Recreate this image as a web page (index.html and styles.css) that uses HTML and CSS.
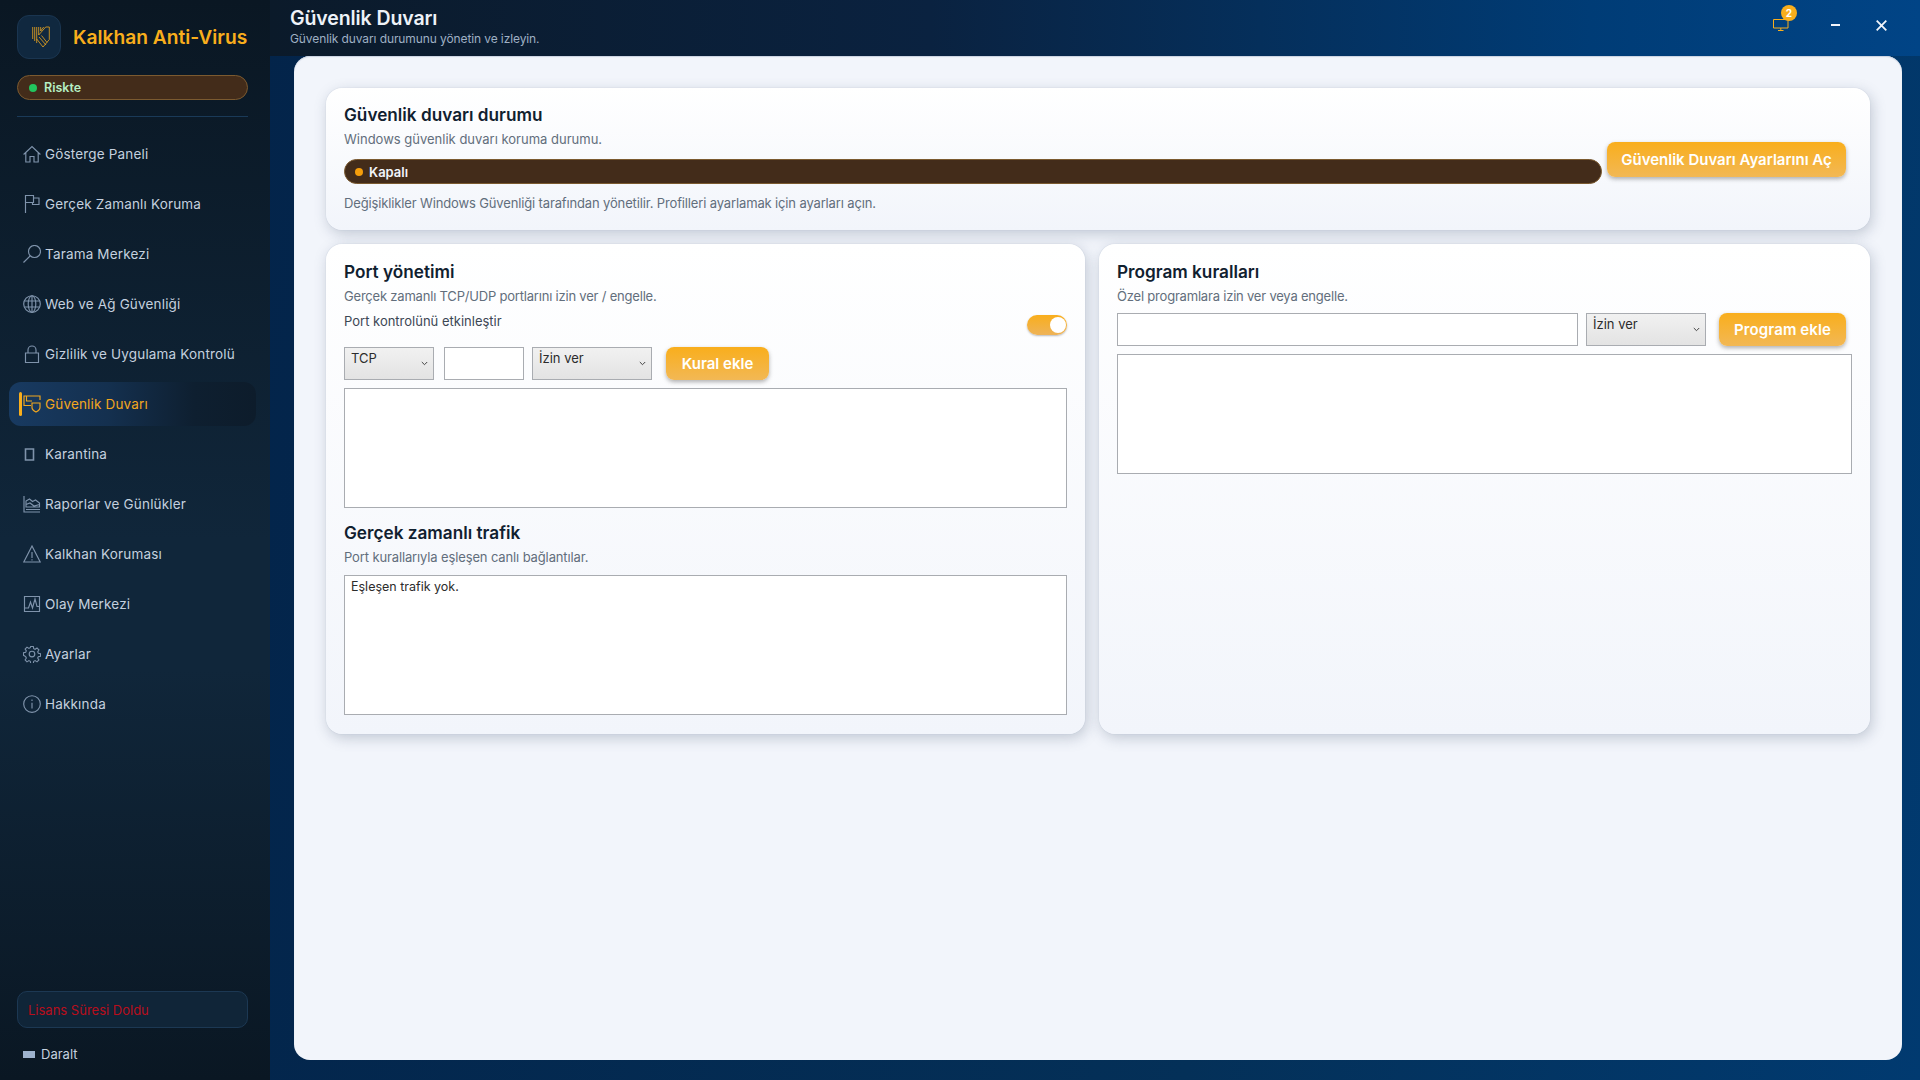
FILE: index.html
```html
<!DOCTYPE html>
<html lang="tr">
<head>
<meta charset="utf-8">
<title>Kalkhan Anti-Virus</title>
<link rel="stylesheet" href="styles.css">
</head>
<body>
<div class="app">
  <aside class="sidebar">
    <div class="brand">
      <div class="logo">
        <svg width="18" height="22" viewBox="0 0 18 22" fill="none" stroke="#f9ae1c" stroke-width=".75"><path d="M.7 1v12M2.700 1v14M4.700 1v16M6.700 1v8l7-8h3.600v12.500L11 21 4.700 13M7 11l7 8M9.500 9.500l5.500 7M8.700 1v4l3-4"/></svg>
      </div>
      <div class="brand-name">Kalkhan Anti-Virus</div>
    </div>
    <div class="risk"><span class="risk-dot"></span>Riskte</div>
    <div class="divider"></div>
    <nav class="nav">
      <a class="nav-item"><svg class="ico" viewBox="0 0 18 18"><path d="M.6 9.500 9 1.500 17.400 9.500M2.800 7.500v9.500h4.200v-5.500h4v5.500h4.200V7.500"/></svg>Gösterge Paneli</a>
      <a class="nav-item"><svg class="ico" viewBox="0 0 18 18"><path d="M2.500 18V.5h8v2.500h5.500v6.500H9.500V7.500H2.500M10.500 3v4.500h-1"/></svg>Gerçek Zamanlı Koruma</a>
      <a class="nav-item"><svg class="ico" viewBox="0 0 18 18"><circle cx="11.500" cy="6.500" r="6"/><path d="M7.200 10.800.5 17.500"/></svg>Tarama Merkezi</a>
      <a class="nav-item"><svg class="ico" viewBox="0 0 18 18"><circle cx="9" cy="9" r="8.300"/><ellipse cx="9" cy="9" rx="3.800" ry="8.300"/><path d="M9 .7v16.600M1.500 6h15M1.500 12h15"/></svg>Web ve Ağ Güvenliği</a>
      <a class="nav-item"><svg class="ico" viewBox="0 0 18 18"><path d="M2.500 8h13v9.500h-13zM5 8V5a4 4 0 0 1 8 0v3"/></svg>Gizlilik ve Uygulama Kontrolü</a>
      <a class="nav-item active"><span class="active-bar"></span><svg class="ico" viewBox="0 0 18 18"><path d="M8 10.500H1V1h16v4M3.500 1v5H9"/><path d="M9 8h8v4.500c0 2-2 3.500-4 4.500-2-1-4-2.500-4-4.500z"/></svg>Güvenlik Duvarı</a>
      <a class="nav-item"><svg class="ico ico-box" viewBox="0 0 18 18"><path d="M2.500 4h8v11h-8z"/></svg>Karantina</a>
      <a class="nav-item"><svg class="ico" viewBox="0 0 18 18"><path d="M1 1v16h16M3 14.500h14M3 12V6l3.500-2 3 2.500 3-1.500L16.500 8v4zM3 9.500 7 8l4 3 5.500-1.500"/></svg>Raporlar ve Günlükler</a>
      <a class="nav-item"><svg class="ico" viewBox="0 0 18 18"><path d="M9 1 .8 17h16.400zM9 7v6M9 14.200v1.300"/></svg>Kalkhan Koruması</a>
      <a class="nav-item"><svg class="ico" viewBox="0 0 18 18"><path d="M1.500 1.500h15v15h-15zM2 13h3.500L7.500 7l2 6 2.500-9 2 7.500h2.500"/></svg>Olay Merkezi</a>
      <a class="nav-item"><svg class="ico" viewBox="0 0 18 18"><circle cx="9" cy="9" r="2.800"/><path d="M7.600 1h2.800l.4 2.300 1.500.7 2-1.300 2 2-1.300 2 .7 1.500 2.300.4v2.800l-2.300.4-.7 1.500 1.300 2-2 2-2-1.300-1.500.7-.4 2.300H7.600l-.4-2.300-1.500-.7-2 1.300-2-2 1.300-2-.7-1.500L0 10.400V7.600l2.300-.4.700-1.500-1.300-2 2-2 2 1.300 1.500-.7z" transform="translate(.5 .5) scale(.945)"/></svg>Ayarlar</a>
      <a class="nav-item"><svg class="ico" viewBox="0 0 18 18"><circle cx="9" cy="9" r="8.300"/><path d="M9 7.800v5.700M9 4.500v1.400"/></svg>Hakkında</a>
    </nav>
    <div class="license">Lisans Süresi Doldu</div>
    <div class="collapse"><span class="collapse-icon"></span>Daralt</div>
  </aside>

  <div class="content">
    <header class="topbar">
      <div class="page-title">
        <h1>Güvenlik Duvarı</h1>
        <p>Güvenlik duvarı durumunu yönetin ve izleyin.</p>
      </div>
      <div class="top-actions">
        <div class="notify">
          <svg width="16" height="13" viewBox="0 0 16 13" fill="none" stroke="#f9ae1c" stroke-width="1"><path d="M.5.500h14.500v8.500H.5zM7.800 9v2.500M5 11.500h5.500"/></svg>
          <span class="badge">2</span>
        </div>
        <span class="win-min"></span>
        <svg class="win-close" width="11" height="11" viewBox="0 0 11 11" stroke="#f2f5fb" stroke-width="1.800"><path d="M.7.700l9.600 9.600M10.300.7.700 10.300"/></svg>
      </div>
    </header>

    <main class="panel">
      <section class="card status-card">
        <div class="status-main">
          <h2>Güvenlik duvarı durumu</h2>
          <p class="sub sub-wide">Windows güvenlik duvarı koruma durumu.</p>
          <div class="state-pill"><span class="state-dot"></span>Kapalı</div>
          <p class="note">Değişiklikler Windows Güvenliği tarafından yönetilir. Profilleri ayarlamak için ayarları açın.</p>
        </div>
        <button class="btn btn-open">Güvenlik Duvarı Ayarlarını Aç</button>
      </section>

      <div class="columns">
        <section class="card col-card">
          <h2>Port yönetimi</h2>
          <p class="sub sub-tight">Gerçek zamanlı TCP/UDP portlarını izin ver / engelle.</p>
          <div class="toggle-row">
            <span class="toggle-label">Port kontrolünü etkinleştir</span>
            <span class="toggle"><span class="knob"></span></span>
          </div>
          <div class="controls">
            <div class="select-wrap w-tcp"><select><option>TCP</option></select><svg class="chev" width="7" height="5" viewBox="0 0 7 5"><path d="M.8 1l2.700 2.700L6.200 1"/></svg></div>
            <input class="field w-port" type="text">
            <div class="select-wrap w-allow"><select><option>İzin ver</option></select><svg class="chev" width="7" height="5" viewBox="0 0 7 5"><path d="M.8 1l2.700 2.700L6.200 1"/></svg></div>
            <button class="btn btn-rule">Kural ekle</button>
          </div>
          <div class="list list-rules"></div>
          <h2 class="traffic-title">Gerçek zamanlı trafik</h2>
          <p class="sub">Port kurallarıyla eşleşen canlı bağlantılar.</p>
          <div class="list list-traffic">Eşleşen trafik yok.</div>
        </section>

        <section class="card col-card">
          <h2>Program kuralları</h2>
          <p class="sub sub-tight">Özel programlara izin ver veya engelle.</p>
          <div class="controls program-controls">
            <input class="field w-program" type="text">
            <div class="select-wrap w-allow"><select><option>İzin ver</option></select><svg class="chev" width="7" height="5" viewBox="0 0 7 5"><path d="M.8 1l2.700 2.700L6.200 1"/></svg></div>
            <button class="btn btn-program">Program ekle</button>
          </div>
          <div class="list list-rules"></div>
        </section>
      </div>
    </main>
  </div>
</div>
</body>
</html>
```
FILE: styles.css
```css
* { box-sizing: border-box; }
html, body { margin: 0; height: 100%; }
body {
  font-family: Inter, "Noto Sans", "Liberation Sans", sans-serif;
  overflow: hidden;
  background: #04264a;
}
h1, h2, p { margin: 0; }

.app { display: flex; width: 1920px; height: 1080px; }

/* Sidebar */
.sidebar {
  width: 270px;
  flex: none;
  display: flex;
  flex-direction: column;
  padding: 15px 22px 0 17px;
  background: linear-gradient(180deg, #0a1723 0%, #10263a 50%, #10263a 62%, #0a1723 100%);
}
.brand { display: flex; align-items: center; gap: 12px; height: 44px; }
.logo {
  width: 44px; height: 44px;
  border-radius: 12px;
  background: #10283f;
  border: 1px solid #1a3550;
  display: flex; align-items: center; justify-content: center;
  padding-left: 3px;
}
.brand-name { color: #f9ae1c; font-size: 19.2px; font-weight: 600; white-space: nowrap; }
.risk {
  margin-top: 16px;
  height: 25px;
  border-radius: 13px;
  background: #432c1a;
  border: 1px solid #7b5a30;
  display: flex; align-items: center;
  padding-left: 11px;
  color: #b5efc4;
  font-size: 12.500px;
  font-weight: 600;
}
.risk-dot { width: 8px; height: 8px; border-radius: 50%; background: #22c55e; margin-right: 7px; }
.divider { height: 1px; background: #1a3a58; margin-top: 16px; }
.nav { display: flex; flex-direction: column; gap: 6px; margin: 15px -8px 0; }
.nav-item {
  position: relative;
  height: 44px;
  padding-left: 36px;
  display: flex; align-items: center;
  color: #c4d0df;
  font-size: 13.500px;
  letter-spacing: .17px;
  border-radius: 12px;
  white-space: nowrap;
}
.ico {
  position: absolute;
  left: 14px; top: 13px;
  width: 18px; height: 18px;
  fill: none;
  stroke: #7f93ab;
  stroke-width: 1.15;
}
.ico-box { stroke-width: 1.6; }
.nav-item.active {
  color: #f2a71f;
  background: linear-gradient(90deg, #183a61 0%, #14304f 40%, #0e1f30 75%, #0d1c2b 100%);
}
.nav-item.active .ico { stroke: #f2a71f; }
.active-bar {
  position: absolute;
  left: 10px; top: 10px;
  width: 3px; height: 24px;
  background: #f9ae1c;
  border-radius: 2px;
}
.license {
  margin-top: auto;
  height: 37px;
  border-radius: 10px;
  background: #102538;
  border: 1px solid #1c3853;
  color: #b90e1c;
  font-size: 13px;
  display: flex; align-items: center;
  padding-left: 10px;
}
.collapse {
  height: 52px;
  display: flex; align-items: center;
  color: #c4d0df;
  font-size: 13px;
}
.collapse-icon {
  width: 12px; height: 7px;
  background: #9db2cd;
  margin: 0 6px 0 6px;
}

/* Main column */
.content {
  flex: 1;
  display: flex;
  flex-direction: column;
  background: linear-gradient(100deg, #03244a 0%, #043058 60%, #013a70 100%);
}
.topbar {
  height: 56px;
  flex: none;
  display: flex;
  justify-content: space-between;
  padding: 8px 33px 0 20px;
  background: linear-gradient(90deg, #0b1a2a 0%, #0a2240 40%, #003c76 80%, #014486 100%);
}
h1 { font-size: 19.500px; font-weight: 600; color: #eef2f8; line-height: 20px; letter-spacing: -.1px; }
.page-title p { font-size: 12px; color: #9fb0c4; margin-top: 3px; line-height: 16px; letter-spacing: -.1px; }
.top-actions { display: flex; align-items: center; height: 32px; margin-top: 1px; }
.notify { position: relative; width: 16px; height: 13px; display: flex; margin-right: 42px; }
.badge {
  position: absolute;
  left: 8px; top: -14px;
  width: 16px; height: 16px;
  border-radius: 50%;
  background: #f9ae1c;
  color: #fff;
  font-size: 10px;
  font-weight: 700;
  display: flex; align-items: center; justify-content: center;
}
.win-min { width: 9px; height: 2px; background: #f2f5fb; margin-right: 36px; }
.win-close { display: block; }

/* Panel */
.panel {
  margin: 0 18px 20px 24px;
  flex: 1;
  background: #f2f5fb;
  border-radius: 16px;
  padding: 32px;
  box-shadow: inset 0 1px 1px #c9d2e0;
  display: flex;
  flex-direction: column;
  gap: 14px;
}
.card {
  background: linear-gradient(180deg, #ffffff 0%, #f2f5fb 100%);
  border-radius: 16px;
  box-shadow: 0 0 1px #aeb9ca, 2px 4px 14px rgba(90, 105, 130, .32);
}
.status-card { display: flex; height: 142px; gap: 5px; padding: 16px 24px 0 18px; flex: none; }
.status-main { flex: 1; min-width: 0; }
h2 { font-size: 17.200px; font-weight: 600; color: #10202f; line-height: 22px; }
.sub { font-size: 13px; color: #626e7c; line-height: 16px; margin-top: 5px; letter-spacing: -.13px; }
.sub-wide { letter-spacing: 0; }
.sub-tight { letter-spacing: -.2px; }
.state-pill {
  margin-top: 12px;
  height: 25px;
  border-radius: 13px;
  background: #432c1a;
  border: 1px solid #7b5a30;
  display: flex; align-items: center;
  padding-left: 10px;
  color: #f2f5fb;
  font-size: 13px;
  font-weight: 600;
}
.state-dot { width: 8px; height: 8px; border-radius: 50%; background: #f59e0b; margin-right: 6px; }
.note { font-size: 13px; color: #626e7c; line-height: 16px; margin-top: 11px; letter-spacing: -.14px; }
.btn-open { margin-top: 38px; width: 239px; height: 35px; flex: none; }
.btn {
  border: none;
  border-radius: 8px;
  background: linear-gradient(180deg, #f9ae1c 0%, #f2b855 100%);
  color: #fff;
  font-family: inherit;
  font-size: 15px;
  font-weight: 600;
  box-shadow: 0 2px 4px rgba(60, 60, 60, .4);
  padding: 0;
}
.columns { display: grid; grid-template-columns: 759px 1fr; gap: 14px; height: 490px; }
.col-card { min-width: 0; padding: 17px 18px 18px; }
.toggle-row { display: flex; justify-content: space-between; height: 37px; margin-top: 6px; }
.toggle-label { font-size: 13px; color: #3c4754; line-height: 16px; margin-top: 3px; }
.toggle {
  width: 40px; height: 20px;
  margin-top: 5px;
  border-radius: 10px;
  background: linear-gradient(180deg, #f9ae1c, #eeb358);
  box-shadow: 0 1px 2px rgba(60, 60, 60, .35);
  display: flex; align-items: center; justify-content: flex-end;
  padding-right: 1px;
}
.knob { width: 16px; height: 16px; border-radius: 50%; background: #fff; }
.controls { display: flex; height: 33px; }
.program-controls { margin-top: 9px; }
.select-wrap { position: relative; height: 33px; }
.select-wrap select {
  appearance: none;
  width: 100%; height: 100%;
  border: 1px solid #a9acb1;
  border-radius: 0;
  background: linear-gradient(180deg, #f1f1f1, #e3e3e3);
  font-family: inherit;
  font-size: 13px;
  color: #2c2c2c;
  padding: 0 6px 11px;
  margin: 0;
}
.chev {
  position: absolute;
  right: 6px; top: 14px;
  fill: none;
  stroke: #444;
  stroke-width: 1;
  pointer-events: none;
}
.field { border: 1px solid #a9acb1; background: #fff; padding: 0; height: 33px; margin: 0; }
.w-tcp { width: 90px; margin-right: 10px; }
.w-port { width: 80px; margin-right: 8px; }
.w-allow { width: 120px; }
.w-program { width: 461px; margin-right: 8px; }
.btn-rule { width: 103px; margin-left: 14px; }
.btn-program { width: 127px; margin-left: 13px; letter-spacing: .1px; }
.list { border: 1px solid #a9acb1; background: #fff; }
.list-rules { height: 120px; margin-top: 8px; }
.traffic-title { margin-top: 14px; }
.list-traffic {
  height: 140px;
  margin-top: 10px;
  padding: 2px 6px;
  font-size: 12.500px;
  color: #2c2c2c;
  line-height: 18px;
}
```
